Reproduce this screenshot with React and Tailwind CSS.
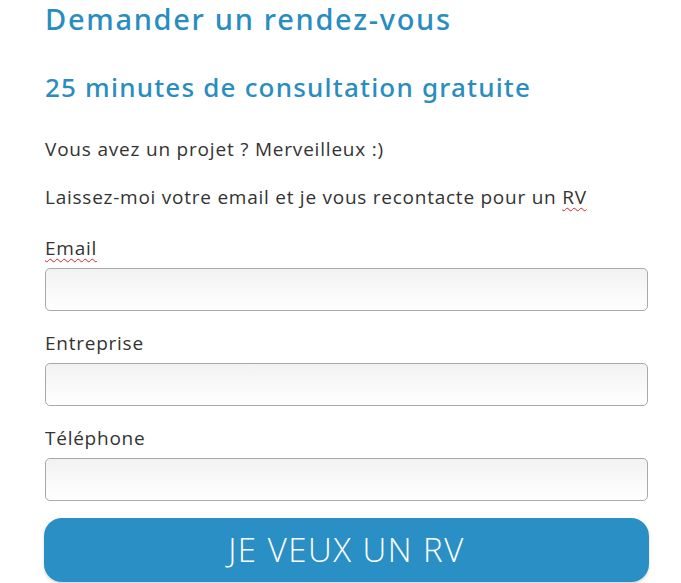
export default function App() {
  const font = { fontFamily: '"Open Sans", "Noto Sans", sans-serif' };
  const head = { fontFamily: '"Noto Sans", "Open Sans", sans-serif' };
  return (
    <div className="w-[681px] h-[583px] overflow-hidden bg-white" style={font}>
      <div className="ml-[45px] w-[603px]">
        <h1 style={head} className="text-[29px] leading-[36px] pt-[1px] font-medium tracking-[1.7px] text-[#2a8dbf]">Demander un rendez-vous</h1>
        <h2 style={head} className="mt-[34px] text-[26px] leading-[32px] font-medium tracking-[1.2px] text-[#2a8dbf]">25 minutes de consultation gratuite</h2>
        <p className="mt-[34px] text-[19px] leading-[24px] tracking-[0.8px] text-[#333]">Vous avez un projet ? Merveilleux :)</p>
        <p className="mt-[24px] text-[19px] leading-[24px] tracking-[0.75px] text-[#333]">
          Laissez-moi votre email et je vous recontacte pour un{' '}
          <span className="underline decoration-wavy decoration-[#e02020] decoration-1 underline-offset-[3px]">RV</span>
        </p>
        <form className="mt-[27px] flex flex-col">
          <label className="text-[19px] leading-[24px] tracking-[0.75px] text-[#333]">
            <span className="underline decoration-wavy decoration-[#e02020] decoration-1 underline-offset-[3px]">Email</span>
          </label>
          <input className="mt-[8px] h-[43px] w-[603px] rounded-[5px] border border-[#a9a9a9] bg-gradient-to-b from-[#f2f2f2] to-white" />
          <label className="mt-[20px] text-[19px] leading-[24px] tracking-[0.75px] text-[#333]">Entreprise</label>
          <input className="mt-[8px] h-[43px] w-[603px] rounded-[5px] border border-[#a9a9a9] bg-gradient-to-b from-[#f2f2f2] to-white" />
          <label className="mt-[20px] text-[19px] leading-[24px] tracking-[0.75px] text-[#333]">Téléphone</label>
          <input className="mt-[8px] h-[43px] w-[603px] rounded-[5px] border border-[#a9a9a9] bg-gradient-to-b from-[#f2f2f2] to-white" />
          <button type="button" className="mt-[17px] -ml-[1px] h-[64px] w-[605px] rounded-[18px] bg-[#2a8fc4] text-white text-[33px] font-light tracking-[1.5px] leading-[64px] shadow-[0_2px_3px_rgba(0,0,0,0.15)]">JE VEUX UN RV</button>
        </form>
      </div>
    </div>
  );
}
